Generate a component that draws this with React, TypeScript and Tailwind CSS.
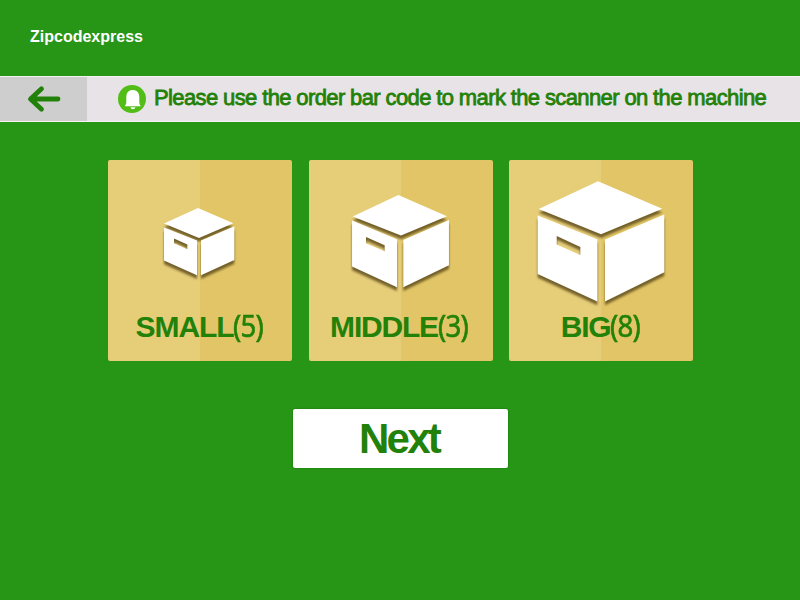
type Size = {
  name: string;
  count: number;
  viewBox: string;
  lid: string;
  left: string;
  right: string;
  labelClass: string;
};

const sizes: Size[] = [
  {
    name: 'SMALL',
    count: 5,
    viewBox: '24 30 552 602',
    lid: 'M294 174 L400 220 L297 264 L192 221 Z',
    left: 'M192 233 L291 272 L291 376 L192 332 Z M222 266 L262 284 L262 298 L222 280 Z',
    right: 'M303 272 L403 229 L403 330 L303 376 Z',
    labelClass: 'tracking-[-1.1px]',
  },
  {
    name: 'MIDDLE',
    count: 3,
    viewBox: '27 30 552 602',
    lid: 'M295 135 L441 199 L303 257 L158 200 Z',
    left: 'M156 212 L291 268 L291 412 L156 350 Z M198 261 L254 286 L254 304 L198 280 Z',
    right: 'M310 270 L447 210 L447 346 L310 412 Z',
    labelClass: '-ml-[2px] tracking-[-1.2px]',
  },
  {
    name: 'BIG',
    count: 8,
    viewBox: '28 30 552 602',
    lid: 'M295 94 L488 176 L304 253 L117 177 Z',
    left: 'M114 197 L293 268 L293 455 L114 372 Z M171 258 L242 291 L242 315 L171 284 Z',
    right: 'M316 269 L494 194 L494 367 L316 455 Z',
    labelClass: 'tracking-[-1.3px]',
  },
];

function Box({ size }: { size: Size }) {
  return (
    <svg viewBox={size.viewBox} className="col-start-1 row-start-1 h-full w-full">
      <g fill="#fff" fillRule="evenodd" className="drop-shadow-[0_11px_3px_rgba(88,70,24,0.8)]">
        <path d={size.left} />
        <path d={size.right} />
        <path d={size.lid} />
      </g>
    </svg>
  );
}

function Card({ size }: { size: Size }) {
  return (
    <button className="grid h-[200.5px] w-[184px] grid-cols-1 grid-rows-1 overflow-hidden rounded-[2px] bg-[linear-gradient(90deg,#e6cd78_50%,#e2c566_50%)]">
      <Box size={size} />
      <span className="col-start-1 row-start-1 mb-4 flex items-baseline self-end justify-self-center text-[30px] leading-9 text-[#228108]">
        <b className={size.labelClass}>{size.name}</b>
        <span className="w-[31px] origin-left scale-x-[0.92] text-left font-['Noto_Sans',sans-serif] tracking-[-0.8px] [-webkit-text-stroke:0.6px_#228108]">
          ({size.count})
        </span>
      </span>
    </button>
  );
}

export default function App() {
  return (
    <div className="flex h-[600px] w-[800px] flex-col overflow-hidden bg-[#279515] font-['Liberation_Sans',Arial,sans-serif]">
      <header className="flex h-[76px] items-center pb-0.5 pl-[30px] text-base font-bold text-white">
        Zipcodexpress
      </header>
      <div className="flex h-[46px] border-y border-[#f5f1f4] bg-[#e8e3e6]">
        <button className="flex w-[87px] items-center justify-center bg-[#cecece]">
          <svg width="34" height="28" viewBox="0 0 34 28" className="mb-px" fill="none" stroke="#228108" strokeWidth="4.8" strokeLinecap="round" strokeLinejoin="round">
            <path d="M31 14H4M14.5 3.8L3.5 14L14.5 24.2" />
          </svg>
        </button>
        <div className="flex items-center pl-[31px]">
          <svg width="28" height="28" viewBox="0 0 28 28" className="mb-px">
            <circle cx="14" cy="14" r="14" fill="#53bd18" />
            <path d="M7 21.3V20.8Q8.3 19.8 8.3 17V12C8.3 7.5 11 5 14.7 5S21.3 7.5 21.3 12V17Q21.3 19.8 22.5 20.8V21.3Z" fill="#fff" />
            <path d="M12.3 22.3H17.5Q16.8 24.3 14.9 24.3T12.3 22.3Z" fill="#fff" />
          </svg>
          <p className="ml-2 pb-0.5 text-[22px] leading-7 tracking-[-0.62px] whitespace-nowrap text-[#228108] [-webkit-text-stroke:0.8px_#228108]">
            Please use the order bar code to mark the scanner on the machine
          </p>
        </div>
      </div>
      <main className="flex flex-col items-center pt-[38px]">
        <div className="ml-px flex gap-[16.5px]">
          {sizes.map((size) => (
            <Card key={size.name} size={size} />
          ))}
        </div>
        <button className="mt-[48.5px] h-[59px] w-[215px] rounded-[2px] bg-white pr-0.5 text-[42px] font-bold leading-[60px] tracking-[-2.8px] text-[#228108] shadow-[0_0_2px_#157008]">
          Next
        </button>
      </main>
    </div>
  );
}
